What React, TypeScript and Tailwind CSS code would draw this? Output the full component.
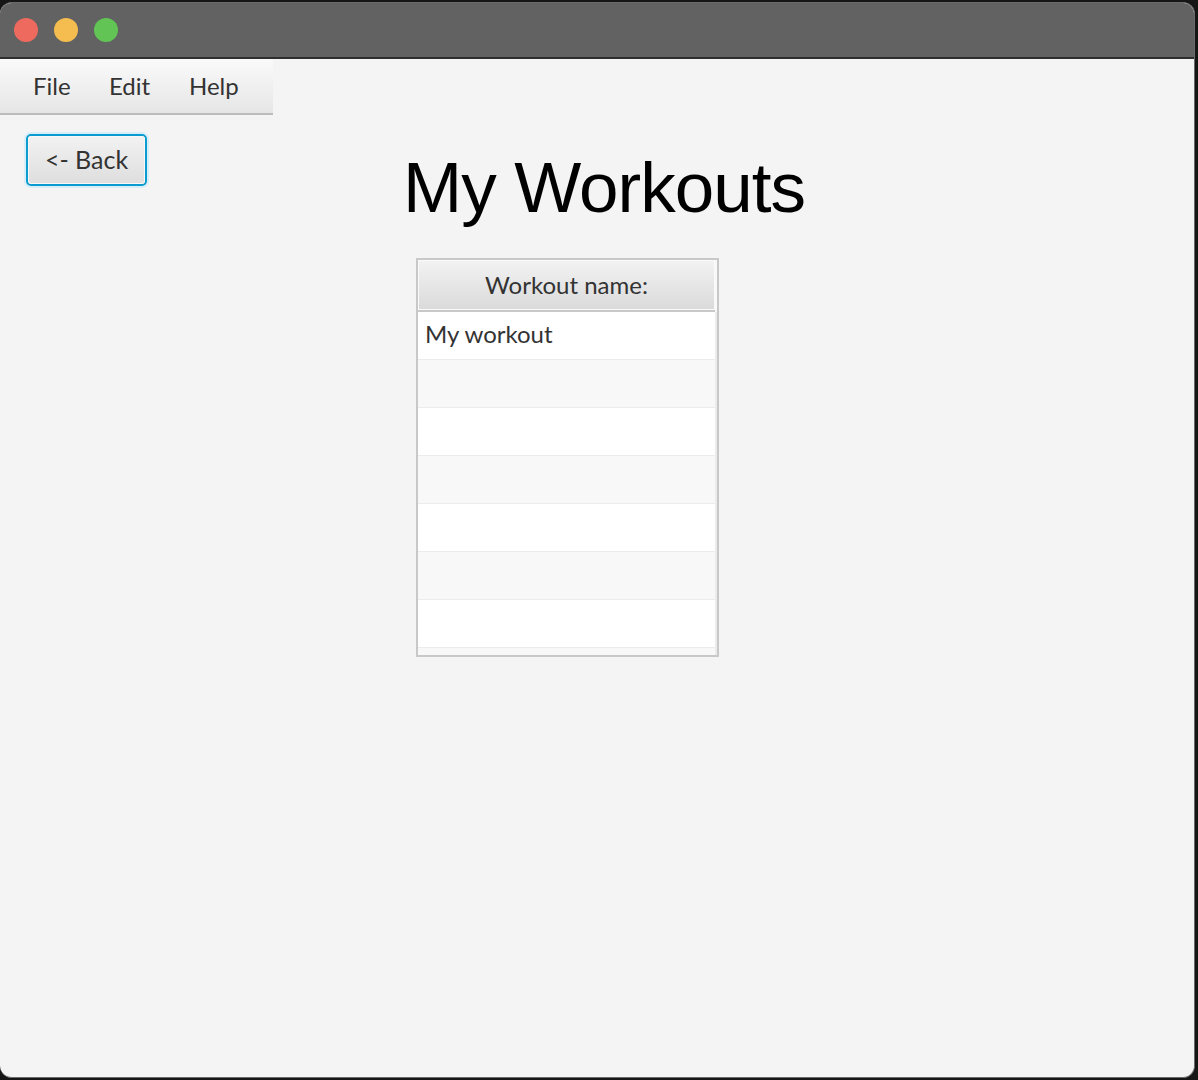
import React from "react";

const rows = ["My workout", "", "", "", "", "", "", ""];

export default function App() {
  return (
    <div className="w-[1198px] h-[1080px] bg-[#161616] overflow-hidden">
      <div className="mt-[2px] w-[1195px] h-[1076px] rounded-[12px] overflow-hidden bg-[#f4f4f4] flex flex-col border border-[#6a6a6a] border-l-0">
        <div className="h-[56px] shrink-0 bg-[#626262] border-b-2 border-[#2e2e2e] flex items-center pl-[14px] gap-[16px]">
          <span className="w-[24px] h-[24px] rounded-full bg-[#ee6a5e]" />
          <span className="w-[24px] h-[24px] rounded-full bg-[#f5bd4f]" />
          <span className="w-[24px] h-[24px] rounded-full bg-[#61c454]" />
        </div>

        <div className="w-[273px] h-[56px] shrink-0 flex items-center pl-[33px] bg-gradient-to-b from-[#fafafa] to-[#e6e6e6] border-b-2 border-[#bcbcbc] font-['Lato','Noto_Sans',sans-serif] text-[24px] text-[#333]">
          <span className="w-[76px]">File</span>
          <span className="w-[80px]">Edit</span>
          <span>Help</span>
        </div>

        <div className="flex">
          <div className="pl-[26px] pt-[19px]">
            <button className="w-[121px] h-[52px] rounded-[5px] border-2 border-[#0a9bd0] shadow-[0_0_0_2px_#d6eef8] bg-gradient-to-b from-[#f2f2f2] to-[#dedede] text-[25px] text-[#333] font-['Lato','Noto_Sans',sans-serif] flex items-center justify-center">
              <span className="w-full h-full rounded-[3px] border border-[#f7f7f7] flex items-center justify-center">
                &lt;- Back
              </span>
            </button>
          </div>

          <div className="ml-[256px] flex flex-col">
            <h1 className="mt-[37px] text-[71px] leading-none tracking-[-1px] text-black font-['Liberation_Sans','Arial',sans-serif]">
              My Workouts
            </h1>

            <div className="mt-[35px] ml-[13px] w-[303px] h-[399px] border-2 border-[#c8c8c8] bg-[#f8f8f8] flex flex-col overflow-hidden font-['Lato','Noto_Sans',sans-serif] text-[24px] text-[#333]">
              <div className="h-[52px] shrink-0 border-b-2 border-[#c8c8c8] bg-gradient-to-b from-[#f3f3f3] to-[#dadada] flex items-center justify-center mr-[2px]">
                <div className="w-full h-full border border-[#fafafa] flex items-center justify-center">
                  Workout name:
                </div>
              </div>
              {rows.map((r, i) => (
                <div
                  key={i}
                  className={
                    "h-[48px] shrink-0 border-b border-[#ececec] border-r-2 border-r-[#ececec] flex items-center pl-[7px] pb-[4px] " +
                    (i % 2 === 0 ? "bg-white" : "bg-[#f8f8f8]")
                  }
                >
                  {r}
                </div>
              ))}
            </div>
          </div>
        </div>
      </div>
    </div>
  );
}
